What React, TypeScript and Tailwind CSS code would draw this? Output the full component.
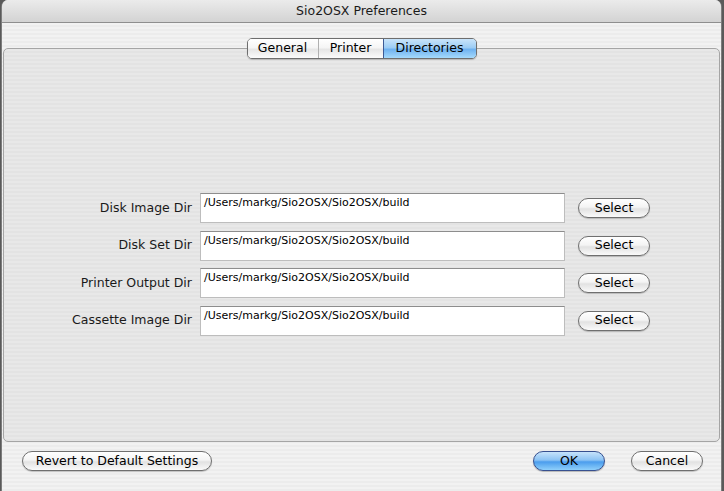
import React from "react"

const font = { fontFamily: '"DejaVu Sans", "Liberation Sans", sans-serif' }

const rows = [
    { label: "Disk Image Dir", path: "/Users/markg/Sio2OSX/Sio2OSX/build" },
    { label: "Disk Set Dir", path: "/Users/markg/Sio2OSX/Sio2OSX/build" },
    { label: "Printer Output Dir", path: "/Users/markg/Sio2OSX/Sio2OSX/build" },
    { label: "Cassette Image Dir", path: "/Users/markg/Sio2OSX/Sio2OSX/build" },
]

function AquaButton({ children, width, primary }: { children: React.ReactNode; width: string; primary?: boolean }) {
    return (
        <button
            className={
                primary
                    ? `${width} h-[20px] rounded-full border border-[#37508f] bg-[linear-gradient(#c6e3fb_0%,#8cc3f4_45%,#4b9ded_55%,#8fd0fb_100%)] text-[12.5px] text-black shadow-[0_1px_1px_rgba(0,0,0,0.25)] flex items-center justify-center`
                    : `${width} h-[20px] rounded-full border border-[#6f6f6f] bg-[linear-gradient(#ffffff_0%,#f4f4f4_45%,#e2e2e2_55%,#fafafa_100%)] text-[12.5px] text-black shadow-[0_1px_1px_rgba(0,0,0,0.2)] flex items-center justify-center`
            }
        >
            {children}
        </button>
    )
}

export default function App() {
    return (
        <div className="w-[724px] h-[491px] bg-[#5a5a5a] flex" style={font}>
            <div className="ml-[1px] w-[721px] h-full flex flex-col rounded-t-[7px] overflow-hidden border-x border-[#7d7d7d] bg-[repeating-linear-gradient(0deg,#ececec_0px,#ececec_2px,#f2f2f2_2px,#f2f2f2_4px)]">
                {/* Title bar */}
                <div className="h-[23px] shrink-0 flex items-center justify-center border-b border-[#8e8e8e] bg-[linear-gradient(#ebebeb,#d3d3d3)] text-[12.5px] text-[#1a1a1a]">
                    Sio2OSX Preferences
                </div>

                {/* Body */}
                <div className="flex-1 flex flex-col pt-[25px]">
                    {/* Tab box */}
                    <div className="mx-[1px] h-[394px] rounded-[5px] border border-[#a5a5a5] bg-[repeating-linear-gradient(0deg,#e3e3e3_0px,#e3e3e3_2px,#e8e8e8_2px,#e8e8e8_4px)] flex flex-col">
                        <div className="-mt-[11px] flex justify-center">
                            <div className="flex h-[21px] rounded-[5px] border border-[#6e6e6e] overflow-hidden text-[12.5px] text-black shadow-[0_1px_1px_rgba(0,0,0,0.2)]">
                                <div className="w-[71px] flex items-center justify-center bg-[linear-gradient(#ffffff_0%,#f5f5f5_45%,#e6e6e6_55%,#fbfbfb_100%)] border-r border-[#b0b0b0]">
                                    General
                                </div>
                                <div className="w-[64px] flex items-center justify-center bg-[linear-gradient(#ffffff_0%,#f5f5f5_45%,#e6e6e6_55%,#fbfbfb_100%)]">
                                    Printer
                                </div>
                                <div className="w-[93px] flex items-center justify-center bg-[linear-gradient(#c9e4fa_0%,#9dcdf5_45%,#6fb2f0_55%,#a5dafc_100%)] border-l border-[#3d5a95]">
                                    Directories
                                </div>
                            </div>
                        </div>

                        <div className="mt-[134px] flex flex-col gap-[7.5px]">
                            {rows.map((r) => (
                                <div key={r.label} className="flex items-center">
                                    <div className="w-[188px] text-right text-[12.5px] text-[#1a1a1a]">{r.label}</div>
                                    <div className="ml-[8px] w-[365px] h-[30px] bg-white border border-[#bdbdbd] border-t-[#8d8d8d] pl-[3px] pt-[2px] text-[11px] text-black leading-[13px]">
                                        {r.path}
                                    </div>
                                    <div className="ml-[13px]">
                                        <AquaButton width="w-[72px]">Select</AquaButton>
                                    </div>
                                </div>
                            ))}
                        </div>
                    </div>

                    {/* Bottom buttons */}
                    <div className="mt-[9px] flex items-center pl-[20px] pr-[18px]">
                        <AquaButton width="w-[190px]">Revert to Default Settings</AquaButton>
                        <div className="flex-1" />
                        <AquaButton width="w-[72px]" primary>
                            OK
                        </AquaButton>
                        <div className="ml-[26px]">
                            <AquaButton width="w-[72px]">Cancel</AquaButton>
                        </div>
                    </div>
                </div>
            </div>
        </div>
    )
}
